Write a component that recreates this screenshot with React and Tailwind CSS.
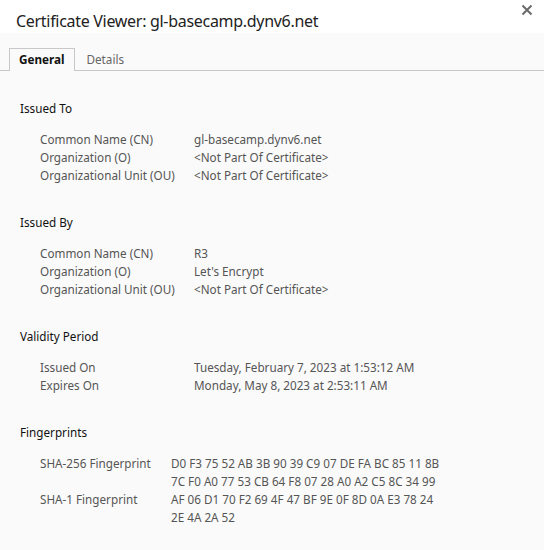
export default function App() {
  const font = { fontFamily: '"Noto Sans", "Open Sans", sans-serif' };
  const Section = ({ title, rows, labelW = "w-[154px]" }) => (
    <div>
      <div className="h-[18px] leading-[18px] text-[11.7px] text-[#111]">{title}</div>
      <div className="mt-[13px] pl-5">
        {rows.map(([k, v], i) => (
          <div key={i} className="flex text-[11.7px] leading-[18px] text-[#555]">
            <div className={`${labelW} shrink-0`}>{k}</div>
            <div>{Array.isArray(v) ? v.map((l, j) => <div key={j}>{l}</div>) : v}</div>
          </div>
        ))}
      </div>
    </div>
  );
  return (
    <div className="w-[544px] h-[550px] bg-[#fafafa] flex flex-col" style={font}>
      <div className="h-[33px] bg-white relative shrink-0">
        <div className="absolute left-4 top-[10px] text-[16px] tracking-[-0.3px] leading-[22px] text-[#222]">Certificate Viewer: gl-basecamp.dynv6.net</div>
        <svg className="absolute left-[521px] top-[4px]" width="12" height="12" viewBox="0 0 12 12">
          <path d="M1.5 1.5 L10.5 10.5 M10.5 1.5 L1.5 10.5" stroke="#6a6a6a" strokeWidth="2" />
        </svg>
      </div>
      <div className="mt-[15px] flex items-end border-b border-[#c8c8c8] h-[23px] pl-[9px]">
        <div className="h-[23px] px-[9px] border border-b-0 border-[#c8c8c8] bg-[#fafafa] -mb-px pb-px text-[11.7px] font-bold leading-[21px] text-[#111]">General</div>
        <div className="h-[22px] px-3 text-[11.7px] leading-[22px] text-[#666]">Details</div>
      </div>
      <div className="pl-5 pt-[28px] flex flex-col gap-[29px]">
        <Section title="Issued To" rows={[["Common Name (CN)", "gl-basecamp.dynv6.net"], ["Organization (O)", "<Not Part Of Certificate>"], ["Organizational Unit (OU)", "<Not Part Of Certificate>"]]} />
        <Section title="Issued By" rows={[["Common Name (CN)", "R3"], ["Organization (O)", "Let's Encrypt"], ["Organizational Unit (OU)", "<Not Part Of Certificate>"]]} />
        <Section title="Validity Period" rows={[["Issued On", "Tuesday, February 7, 2023 at 1:53:12 AM"], ["Expires On", "Monday, May 8, 2023 at 2:53:11 AM"]]} />
        <Section title="Fingerprints" labelW="w-[131px]" rows={[["SHA-256 Fingerprint", ["D0 F3 75 52 AB 3B 90 39 C9 07 DE FA BC 85 11 8B", "7C F0 A0 77 53 CB 64 F8 07 28 A0 A2 C5 8C 34 99"]], ["SHA-1 Fingerprint", ["AF 06 D1 70 F2 69 4F 47 BF 9E 0F 8D 0A E3 78 24", "2E 4A 2A 52"]]]} />
      </div>
    </div>
  );
}
